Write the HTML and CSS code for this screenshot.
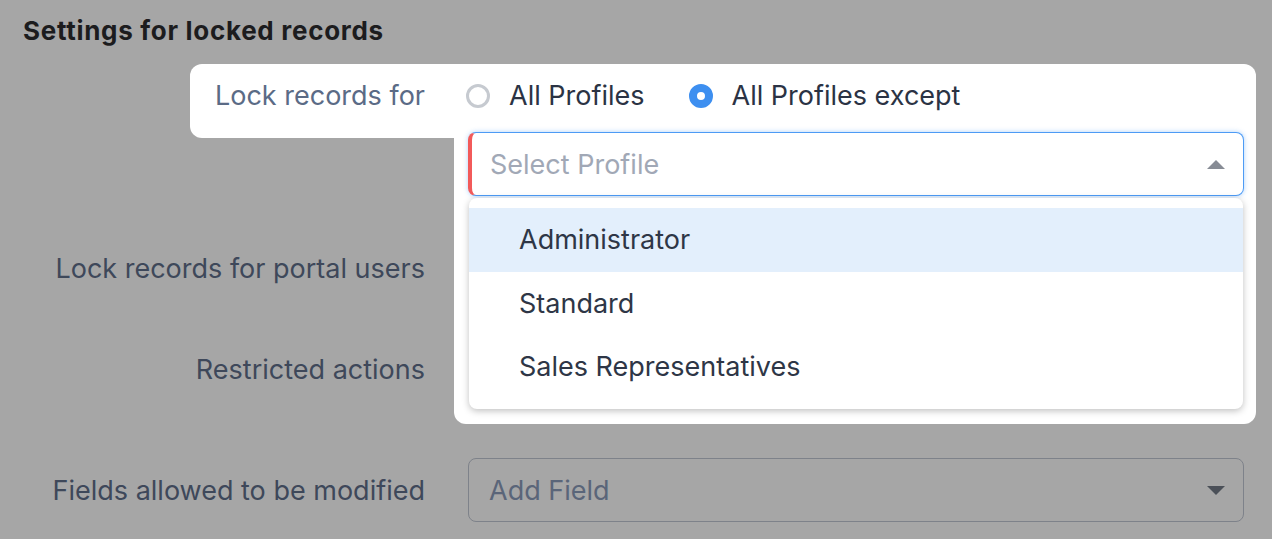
FILE: index.html
```html
<html>
<head>
    <link rel="stylesheet" href="styles.css">
</head>
<body>
    <h2 class="title">Settings for locked records</h2>

    <div class="form">
        <div class="row spotlight">
            <div class="label">Lock records for</div>
            <div class="control radios">
                <label class="radio"><span class="dot"></span>All Profiles</label>
                <label class="radio checked"><span class="dot"></span>All Profiles except</label>
            </div>

            <div class="spot-tail"></div>

            <div class="picker">
                <div class="select open">
                    <span class="placeholder">Select Profile</span>
                    <span class="caret up"></span>
                </div>
                <ul class="options">
                    <li class="active">Administrator</li>
                    <li>Standard</li>
                    <li>Sales Representatives</li>
                </ul>
            </div>
        </div>

        <div class="row portal">
            <div class="label">Lock records for portal users</div>
            <div class="control"></div>
        </div>

        <div class="row actions">
            <div class="label">Restricted actions</div>
            <div class="control"></div>
        </div>

        <div class="row fields">
            <div class="label">Fields allowed to be modified</div>
            <div class="control">
                <div class="select dim">
                    <span class="placeholder">Add Field</span>
                    <span class="caret down"></span>
                </div>
            </div>
        </div>
    </div>
</body>
</html>
```

FILE: styles.css
```css
body { margin: 0; background: #a6a6a6; font-family: Inter, "Noto Sans", sans-serif; color: #3d4759; overflow: hidden; }

.title { margin: 0; padding: 15px 23px 0; height: 33px; font-size: 26px; font-weight: 700; color: #1c1c1e; letter-spacing: 0.7px; line-height: 32px; }

.form { padding-top: 16px; }

.row { display: flex; align-items: center; }
.label { width: 425px; flex: none; text-align: right; font-size: 27px; color: #3e485a; }
.control { margin-left: 43px; width: 776px; }

/* highlighted row */
.spotlight { position: relative; align-items: flex-start; box-sizing: border-box; padding-top: 16px; margin-left: 190px; width: 1066px; height: 74px; line-height: 32px; background: #fff; border-radius: 12px 12px 0 12px; }
.spotlight .label { width: 235px; color: #5b6b86; }
.radios { display: flex; align-items: center; height: 32px; }

.radio { display: flex; align-items: center; font-size: 27px; color: #2b3344; margin-right: 46px; }
.radio .dot { width: 24px; height: 24px; box-sizing: border-box; border: 3px solid #c6cad0; border-radius: 50%; margin-right: 19px; margin-left: -2px; }
.radio.checked .dot { border: 8px solid #3d8ff0; background: #fff; }

.spot-tail { position: absolute; left: 264px; top: 74px; width: 802px; height: 286px; background: #fff; border-radius: 0 0 12px 12px; }

.picker { position: absolute; left: 278px; top: 68px; width: 776px; line-height: normal; }

.select { display: flex; align-items: center; justify-content: space-between; box-sizing: border-box; height: 64px; padding: 0 18px 0 20px; border-radius: 8px; font-size: 27px; }
.select.open { padding-left: 18px; background: #fff; border: 1.5px solid #4d9bf5; border-left: 4px solid #f25a5a; box-shadow: 0 0 5px rgba(77, 155, 245, 0.45); }
.select.open .placeholder { color: #a1a8b6; }
.select.dim { border: 1.5px solid #7e828a; }
.select.dim .placeholder { color: #5a6579; }

.caret { width: 0; height: 0; border-left: 9px solid transparent; border-right: 9px solid transparent; }
.caret.up { border-bottom: 9px solid #878c95; }
.caret.down { border-top: 9px solid #4b5058; }

.options { list-style: none; margin: 2px 1px 0; padding: 10px 0; background: #fff; border-radius: 8px; box-shadow: 0 2px 7px rgba(0, 0, 0, 0.25); }
.options li { height: 63.5px; line-height: 63.5px; padding-left: 50px; font-size: 27px; color: #2e3646; }
.options li.active { background: #e3effc; }

.portal { margin-top: 98px; height: 64px; }
.actions { margin-top: 37px; height: 64px; }
.fields { margin-top: 57px; height: 64px; }
```
